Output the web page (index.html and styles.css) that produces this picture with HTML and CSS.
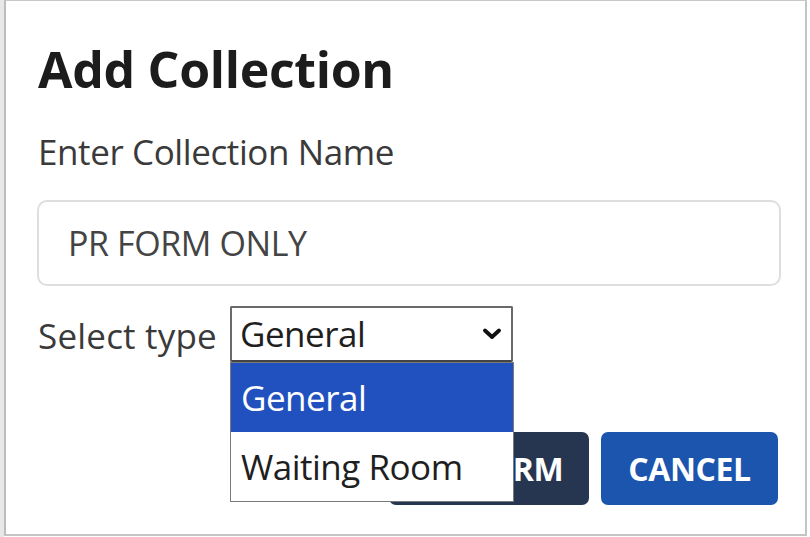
FILE: index.html
```html
<!DOCTYPE html>
<html lang="en">
<head>
<meta charset="utf-8">
<title>Add Collection</title>
<link rel="stylesheet" href="styles.css">
</head>
<body>
<div class="page">
  <div class="modal">
    <h1 class="title">Add Collection</h1>
    <label class="label" for="name">Enter Collection Name</label>
    <div class="input" id="name">PR FORM ONLY</div>
    <div class="type-row">
      <span class="type-label">Select type</span>
      <div class="select">
        <span class="select-value">General</span>
        <svg class="chevron" width="18" height="12" viewBox="0 0 18 12" aria-hidden="true">
          <path d="M2 2.5 L9 9 L16 2.5" fill="none" stroke="#111" stroke-width="3.8" stroke-linecap="round" stroke-linejoin="round"/>
        </svg>
        <ul class="options">
          <li class="option selected">General</li>
          <li class="option">Waiting Room</li>
        </ul>
      </div>
    </div>
    <div class="actions">
      <button class="btn confirm">CONFIRM</button>
      <button class="btn cancel">CANCEL</button>
    </div>
  </div>
</div>
</body>
</html>
```
FILE: styles.css
```css
html, body {
  margin: 0;
  padding: 0;
  background: #ffffff;
}

body {
  font-family: "Open Sans", "Noto Sans", "Liberation Sans", sans-serif;
  color: #333;
}

.page {
  width: 810px;
  height: 537px;
  box-sizing: border-box;
  border-left: 4px solid #e8e8e8;
  overflow: hidden;
}

.modal {
  width: 803px;
  height: 536px;
  box-sizing: border-box;
  border-top: 1px solid #c8c8c8;
  border-left: 2px solid #bdbdbd;
  border-right: 2px solid #c4c4c4;
  border-bottom: 2px solid #c4c4c4;
  padding: 38px 24px 0 32px;
}

.title {
  margin: 0;
  font-size: 50px;
  line-height: 60px;
  font-weight: 700;
  color: #1c1c1c;
  letter-spacing: -0.3px;
}

.label {
  display: block;
  margin-top: 31px;
  font-size: 35px;
  line-height: 44px;
  color: #3a3a3a;
  letter-spacing: -0.4px;
}

.input {
  margin-top: 26px;
  margin-left: -1px;
  height: 86px;
  box-sizing: border-box;
  border: 2px solid #dedede;
  border-radius: 10px;
  padding-left: 29px;
  font-size: 34px;
  line-height: 82px;
  color: #444;
  letter-spacing: -0.4px;
}

.type-row {
  margin-top: 20px;
  display: flex;
  align-items: flex-end;
  gap: 13px;
}

.type-label {
  font-size: 35px;
  line-height: 44px;
  color: #3a3a3a;
  letter-spacing: 0.2px;
  margin-bottom: 4px;
}

.select {
  position: relative;
  width: 283px;
  height: 56px;
  box-sizing: border-box;
  border: 2px solid #6a6a6a;
  border-bottom-color: #444;
  border-radius: 2px;
  display: flex;
  align-items: center;
  justify-content: space-between;
  padding: 0 10px 0 8px;
}

.select-value {
  font-size: 35px;
  line-height: 44px;
  color: #1f1f1f;
  letter-spacing: -0.5px;
}

.chevron {
  display: block;
}

.options {
  position: absolute;
  top: 54px;
  left: -2px;
  width: 284px;
  margin: 0;
  padding: 0;
  list-style: none;
  background: #ffffff;
  border: 1.5px solid #7a7a7a;
  box-sizing: border-box;
  z-index: 2;
}

.option {
  height: 69px;
  box-sizing: border-box;
  padding-left: 10px;
  font-size: 35px;
  line-height: 69px;
  color: #1f1f1f;
  letter-spacing: -0.5px;
}

.option.selected {
  background: #2151be;
  color: #ffffff;
}

.actions {
  margin-top: 70px;
  display: flex;
  justify-content: flex-end;
  gap: 12px;
  padding-right: 3px;
}

.btn {
  height: 73px;
  border: none;
  border-radius: 7px;
  font-family: "Open Sans", "Noto Sans", "Liberation Sans", sans-serif;
  font-size: 32px;
  font-weight: 700;
  letter-spacing: -0.4px;
  color: #ffffff;
  padding: 0;
}

.confirm {
  width: 200px;
  background: #263651;
}

.cancel {
  width: 177px;
  background: #1c55ae;
}
```
